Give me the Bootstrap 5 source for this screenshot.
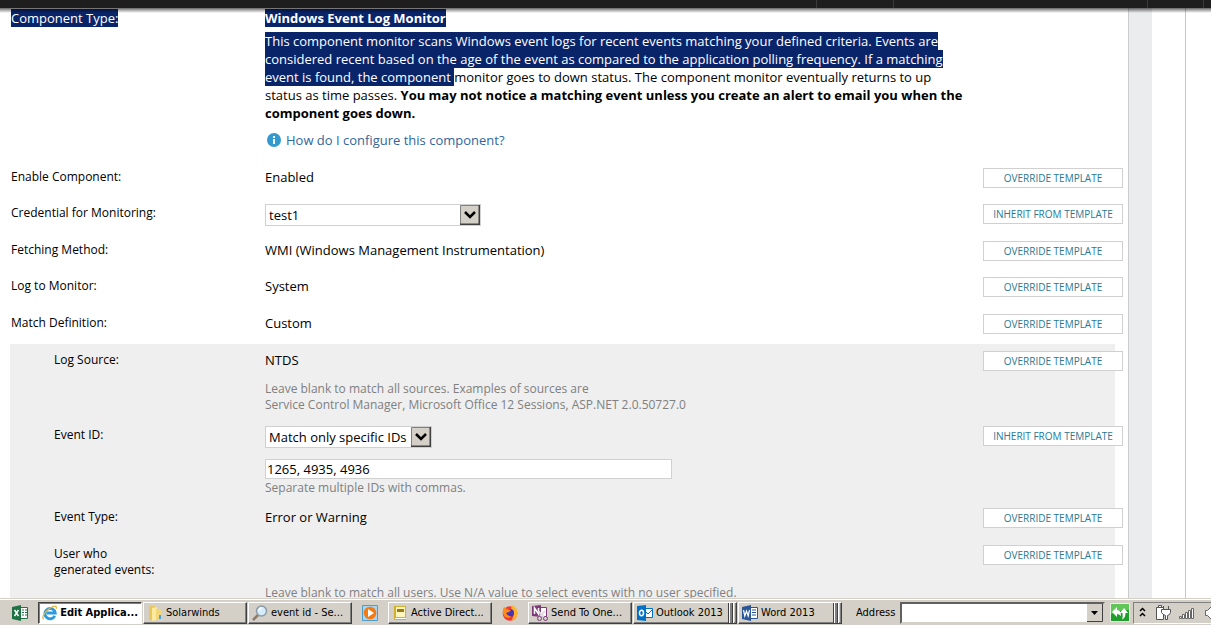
<!DOCTYPE html>
<html lang="en">
<head>
<meta charset="utf-8">
<meta name="viewport" content="width=device-width, initial-scale=1">
<title>Edit Application Monitor</title>
<link href="https://cdn.jsdelivr.net/npm/bootstrap@5.3.0/dist/css/bootstrap.min.css" rel="stylesheet">
<style>
body{font-family:"Open Sans",sans-serif;font-size:13px;line-height:18px;color:#000;background:#fff}
.topbar{height:8px;background:#1e1e1e}
.topbar span{border-left:1px solid #3a3a3a}
.tab-a{width:77px}.tab-b{width:254px}.tab-c{width:56px}.tab-d{width:8px}
.page-area{min-height:0}
.top-shade{height:5px;background:linear-gradient(rgba(0,0,0,.6),rgba(0,0,0,.35) 40%,rgba(0,0,0,0));pointer-events:none}
.editor{padding:1px 5px 0 10px;min-width:0}
.gutter{width:24px;background:#ebecee;border-left:1px solid #ccc}
.side{width:59px;padding-right:25px}
.side div{border-right:1px solid #c6c6c6}
.picked{background:#0a246a;color:#fff}
.set-row{display:grid;grid-template-columns:254px minmax(0,1fr) 140px;min-height:36px;padding-top:7px;padding-left:1px;align-items:start}
.set-row.intro{padding-top:0}
.intro-text{max-width:700px;margin-top:5px;margin-bottom:9px}
.wide-value{grid-column:2 / span 2}
.set-label{font-size:12px;line-height:16px;padding-top:1px}
.help-link{color:#336699;text-decoration:none;gap:5px;margin-left:2px;margin-bottom:12px}
.tall{min-height:37px}
.group-box{background:#efefef;margin:1px 8px 0 0;padding-bottom:40px}
.group-box .set-row{margin-right:-8px}
.group-box .set-label{padding-left:43px}
.source-row{min-height:75px}.event-row{min-height:82px}.user-row{min-height:90px}
.hint{font-size:12px;line-height:16px;color:#808080;margin:12px 0 0}
.hint.near{margin-top:1px}
.hint.far{margin-top:40px}
.tpl-btn{width:140px;height:20px;border:1px solid #d0d0d0;border-radius:0;background:#fff;color:#297994;font-size:10px;line-height:18px;padding:0;text-align:center}
.old-select{appearance:none;display:block;height:22px;border:1px solid #d0d0d0;border-radius:0;color:#000;padding:0 22px 0 3px;font-size:13px;line-height:20px;
background:#fff url("data:image/svg+xml,%3Csvg xmlns='http://www.w3.org/2000/svg' width='20' height='20'%3E%3Cpath fill='%23d4d0c8' d='M0 0h20v20H0z'/%3E%3Cpath fill='none' stroke='%23808080' d='M.5 20V.5H20'/%3E%3Cpath fill='none' stroke='%23404040' stroke-width='2' d='M0 19.500h19.500V0'/%3E%3Cpath fill='none' stroke='%23000' stroke-width='2.500' d='m5 7 5 5 5-5'/%3E%3C/svg%3E") no-repeat right 0 top 0}
.cred{width:216px}.match{width:167px}
.id-input{display:block;width:407px;height:20px;border:1px solid #d0d0d0;padding:0 1px;margin-top:11px;font-size:13px;line-height:18px;color:#000}
.taskbar{height:27px;background:#d4d0c8;border-top:1px solid #d4d0c8;box-shadow:inset 0 1px #fff;padding:3px 0 1px 3px;gap:1px;font-family:"DejaVu Sans Condensed","DejaVu Sans",sans-serif;font-size:11px;line-height:14px}
.quick{width:16px;height:16px;margin:0 9px;padding:0;border:0;background:none;line-height:0}
.task{width:104px;height:22px;padding:0 3px;gap:3px;border:1px solid;border-color:#fff #404040 #404040 #fff;box-shadow:inset -1px -1px #808080;background:#d4d0c8;text-align:left;color:#000}
.task.current{background:#fff;border-color:#404040 #fff #fff #404040;box-shadow:inset 1px 1px #808080;font-weight:700}
.stacked{padding-right:0}
.stack-end{width:8px;height:20px;border:solid #404040;border-width:0 0 0 1px;box-shadow:inset 1px 0 #fff,inset 3px 0 #808080,inset 4px 0 #404040,inset 5px 0 #fff;margin-left:auto}
.addr-label{margin:0 4px 0 13px}
.addr{appearance:none;min-width:60px;height:22px;border:2px solid;border-color:#606060 #d4d0c8 #d4d0c8 #606060;border-radius:0;
background:#fff url("data:image/svg+xml,%3Csvg xmlns='http://www.w3.org/2000/svg' width='16' height='18'%3E%3Cpath fill='%23d4d0c8' d='M0 0h16v18H0z'/%3E%3Cpath fill='none' stroke='%23404040' d='M0 17.500h15.500V0'/%3E%3Cpath d='M4 7h7l-3.500 4z'/%3E%3C/svg%3E") no-repeat right center}
.go{width:21px;height:20px;margin:0 1px 0 4px}
.tray{width:78px;height:22px;border:1px solid #808080;border-right:0;border-bottom-color:#fff;padding-left:5px;overflow:hidden}
</style>
</head>
<body>
<div class="vh-100 d-flex flex-column overflow-hidden">
  <header class="topbar d-flex justify-content-end flex-shrink-0"><span class="tab-a"></span><span class="tab-b"></span><span class="tab-c"></span><span class="tab-d"></span></header>

  <div class="page-area d-flex flex-grow-1 position-relative overflow-hidden">
    <main class="editor flex-grow-1">
      <div class="set-row intro">
        <div><span class="picked">Component Type:</span></div>
        <div class="wide-value">
          <div><strong class="picked">Windows Event Log Monitor</strong></div>
          <p class="intro-text"><span class="picked">This component monitor scans Windows event logs for recent events matching your defined criteria. Events are considered recent based on the age of the event as compared to the application polling frequency. If a matching event is found, the component </span>monitor goes to down status. The component monitor eventually returns to up status as time passes. <strong>You may not notice a matching event unless you create an alert to email you when the component goes down.</strong></p>
          <a href="#" class="help-link d-flex align-items-center"><svg width="14" height="14" viewBox="0 0 14 14" aria-hidden="true"><circle cx="7" cy="7" r="7" fill="#3399cf"/><path fill="#fff" d="M6 3h2v2H6zM6 6h2v5H6z"/></svg>How do I configure this component?</a>
        </div>
      </div>

      <div class="set-row">
        <div class="set-label">Enable Component:</div><div>Enabled</div>
        <button type="button" class="tpl-btn">OVERRIDE TEMPLATE</button>
      </div>
      <div class="set-row tall">
        <label class="set-label" for="cred">Credential for Monitoring:</label>
        <div><select id="cred" class="old-select cred"><option>test1</option></select></div>
        <button type="button" class="tpl-btn">INHERIT FROM TEMPLATE</button>
      </div>
      <div class="set-row">
        <div class="set-label">Fetching Method:</div><div>WMI (Windows Management Instrumentation)</div>
        <button type="button" class="tpl-btn">OVERRIDE TEMPLATE</button>
      </div>
      <div class="set-row tall">
        <div class="set-label">Log to Monitor:</div><div>System</div>
        <button type="button" class="tpl-btn">OVERRIDE TEMPLATE</button>
      </div>
      <div class="set-row">
        <div class="set-label">Match Definition:</div><div>Custom</div>
        <button type="button" class="tpl-btn">OVERRIDE TEMPLATE</button>
      </div>

      <section class="group-box">
        <div class="set-row source-row">
          <div class="set-label">Log Source:</div>
          <div>NTDS<p class="hint">Leave blank to match all sources. Examples of sources are<br>Service Control Manager, Microsoft Office 12 Sessions, ASP.NET 2.0.50727.0</p></div>
          <button type="button" class="tpl-btn">OVERRIDE TEMPLATE</button>
        </div>
        <div class="set-row event-row">
          <label class="set-label" for="match">Event ID:</label>
          <div>
            <select id="match" class="old-select match"><option>Match only specific IDs</option></select>
            <input class="id-input" type="text" value="1265, 4935, 4936" aria-label="Event IDs" aria-describedby="idHint">
            <p class="hint near" id="idHint">Separate multiple IDs with commas.</p>
          </div>
          <button type="button" class="tpl-btn">INHERIT FROM TEMPLATE</button>
        </div>
        <div class="set-row tall">
          <div class="set-label">Event Type:</div><div>Error or Warning</div>
          <button type="button" class="tpl-btn">OVERRIDE TEMPLATE</button>
        </div>
        <div class="set-row user-row">
          <div class="set-label">User who<br>generated events:</div>
          <div><p class="hint far">Leave blank to match all users. Use N/A value to select events with no user specified.</p></div>
          <button type="button" class="tpl-btn">OVERRIDE TEMPLATE</button>
        </div>
      </section>
    </main>
    <div class="gutter flex-shrink-0"></div>
    <aside class="side d-flex flex-shrink-0"><div class="flex-grow-1"></div></aside>
    <div class="top-shade position-absolute top-0 start-0 w-100"></div>
  </div>

  <footer class="taskbar d-flex align-items-center flex-shrink-0">
    <button type="button" class="quick flex-shrink-0" aria-label="Excel"><svg width="16" height="16" viewBox="0 0 16 16"><path fill="#fff" stroke="#207245" d="M8.500 2.500h7v11h-7z"/><path stroke="#207245" d="M10 5h2m1 0h2M10 7.500h2m1 0h2M10 10h2m1 0h2"/><path fill="#207245" d="M0 2l9-2v16l-9-2z"/><path stroke="#fff" stroke-width="1.500" d="m2.500 5 4 6m0-6-4 6"/></svg></button>
    <button type="button" class="task current d-flex align-items-center flex-shrink-0">
      <svg width="16" height="16" viewBox="0 0 16 16" aria-hidden="true"><path fill="none" stroke="#2a9be0" stroke-width="3" d="M13.500 11A5.500 5.500 0 1 1 14 8H5"/><path fill="none" stroke="#f0b52c" stroke-width="1.300" d="M2 14.500C-1 13 3 6 9 2.500c4-2.500 7-2.300 6 1"/></svg><span class="text-nowrap">Edit Applica...</span></button>
    <button type="button" class="task d-flex align-items-center flex-shrink-0">
      <svg width="16" height="16" viewBox="0 0 16 16" aria-hidden="true"><path fill="#e8c75c" d="M2 1h6l1 2v12H2z"/><path fill="#fbe9a0" d="m5 3 5-1v13l-5 1z"/><path fill="#f3d776" d="M9 4h5v11H9z"/><path fill="#4aa3e0" d="M12 10h2v4h-2z"/></svg><span>Solarwinds</span></button>
    <button type="button" class="task d-flex align-items-center flex-shrink-0">
      <svg width="16" height="16" viewBox="0 0 16 16" aria-hidden="true"><path stroke="#8a7a68" stroke-width="2.500" d="m1 15 5-5"/><circle cx="9.500" cy="6" r="5" fill="#d5ecfa" stroke="#8c9ba8" stroke-width="1.500"/><path stroke="#fff" stroke-width="1.500" fill="none" d="M7 6q0-2 2.500-3"/></svg><span class="text-nowrap">event id - Se...</span></button>
    <button type="button" class="quick flex-shrink-0" aria-label="Media Player"><svg width="16" height="16" viewBox="0 0 16 16"><path fill="#a7d5f2" stroke="#4c9ccc" d="M.5.5h15v15H.5z"/><circle cx="8" cy="8" r="6.300" fill="#f47b14"/><path fill="#fff" d="m6 4 6 4-6 4z"/></svg></button>
    <button type="button" class="task d-flex align-items-center flex-shrink-0">
      <svg width="16" height="16" viewBox="0 0 16 16" aria-hidden="true"><path fill="#d4ae2d" d="M2 1h12v14H2z"/><path fill="#fff5bd" d="M4 2h9v10H4z"/><path fill="#9b7a14" d="M5 4h7v3H5z"/><path fill="#fff" d="M3 13h11v1H3z"/></svg><span class="text-nowrap">Active Direct...</span></button>
    <button type="button" class="quick flex-shrink-0" aria-label="Firefox"><svg width="16" height="16" viewBox="0 0 16 16"><circle cx="8" cy="8.500" r="7.300" fill="#f5372f"/><path fill="#ffb52a" d="M10 0q6 3 5.500 9-1 5-6 6.500Q14 9 9 4z"/><circle cx="8" cy="8" r="4" fill="#4932b4"/><path fill="#ff8b1d" d="m2 2 3 2 4 1-2 2-3 1q2 4 6 3-3 3-7 1Q-1 7 2 2z"/></svg></button>
    <button type="button" class="task d-flex align-items-center flex-shrink-0">
      <svg width="16" height="16" viewBox="0 0 16 16" aria-hidden="true"><path fill="#fff" stroke="#80397b" d="M7.500 2.500h7v9h-7z"/><path fill="#80397b" d="M0 1l9-1v12l-9-1z"/><path fill="none" stroke="#fff" stroke-width="1.500" d="M2.500 9V3l4 6V3"/><path stroke="#e5dfe5" stroke-width="2" d="m6 6 7 7m0-7-6 7"/><g fill="none" stroke="#80397b"><circle cx="7.500" cy="13.500" r="2"/><circle cx="13.500" cy="13.500" r="2"/></g></svg><span class="text-nowrap">Send To One...</span></button>
    <button type="button" class="task stacked d-flex align-items-center flex-shrink-0">
      <svg width="16" height="16" viewBox="0 0 16 16" aria-hidden="true"><path fill="#fff" stroke="#0072c6" d="M7.500 3.500h8v9h-8z"/><path fill="none" stroke="#0072c6" d="m8 6 3 3 5-5"/><path fill="#0072c6" d="M0 1l9-1v16l-9-1z"/><ellipse cx="4.500" cy="8" rx="2" ry="2.700" fill="none" stroke="#fff" stroke-width="1.500"/></svg><span class="text-nowrap">Outlook 2013</span><span class="stack-end"></span></button>
    <button type="button" class="task stacked d-flex align-items-center flex-shrink-0">
      <svg width="16" height="16" viewBox="0 0 16 16" aria-hidden="true"><path fill="#fff" stroke="#2a5699" d="M8.500 2.500h7v11h-7z"/><path stroke="#2a5699" d="M10 5h4m-4 2.500h4M10 10h4"/><path fill="#2a5699" d="M0 2l9-2v16l-9-2z"/><path fill="none" stroke="#fff" stroke-width="1.200" d="m1.500 5 1.300 6L4.500 6l1.700 5 1.300-6"/></svg><span class="text-nowrap">Word 2013</span><span class="stack-end"></span></button>
    <label class="addr-label flex-shrink-0" for="addr">Address</label>
    <select id="addr" class="addr flex-grow-1"></select>
    <button type="button" class="go border-0 p-0 bg-transparent flex-shrink-0" aria-label="Go"><svg class="d-block" width="21" height="20" viewBox="0 0 21 20"><path fill="#1fa02a" stroke="#e4f4e0" d="M.5.5h19v18H.5z"/><path fill="#62c558" d="M1 1h18v6q-9 0-18 4z"/><path fill="#fff" d="M2 9l5-5v3q4 0 4 6-2-2-4-2v3zM14 5l4 5h-2.500q0 5-3.500 6.500 1-2.500.5-6.500H10z"/></svg></button>
    <div class="tray d-flex align-items-center flex-shrink-0">
      <svg class="flex-shrink-0" width="72" height="18" viewBox="0 0 72 18" role="img" aria-label="Power, network and volume"><path fill="none" stroke="#000" stroke-width="1.500" d="m1 7 2.500-2.500L6 7m-5 5 2.500-2.500L6 12"/><path fill="#fff" stroke="#555" d="M17.500 3.500h7v12h-7zM19.500 1.500h3v2h-3z"/><path fill="#fff" stroke="#555" d="M22.500 5.500h9v3q-1 3-3 3v4h-2v-4q-3-1-4-3zM24.500 2v3.500M29.500 2v3.500"/><path fill="#fff" stroke="#666" d="M40.500 12.500h2v2h-2zM43.500 10.500h2v4h-2zM46.500 8.500h2v6h-2zM49.500 6.500h2v8h-2zM52.500 4.500h2v10h-2z"/><path fill="#fff" stroke="#666" d="M66.500 6.500h2l4-4v13l-4-4h-2z"/></svg>
    </div>
  </footer>
</div>
<script src="https://cdn.jsdelivr.net/npm/bootstrap@5.3.0/dist/js/bootstrap.bundle.min.js"></script>
</body>
</html>
